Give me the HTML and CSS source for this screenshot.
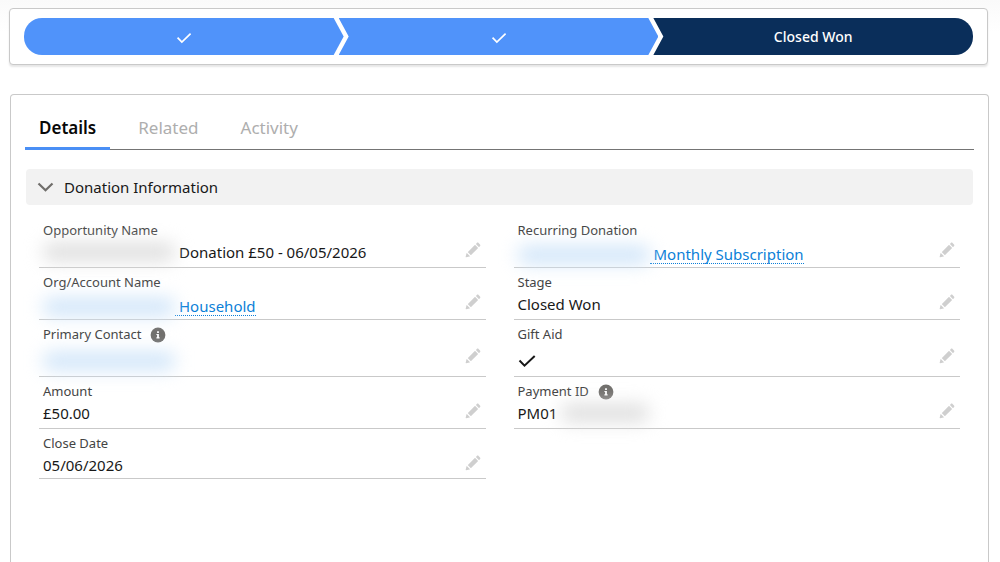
FILE: index.html
```html
<!DOCTYPE html>
<html lang="en">
<head>
<meta charset="utf-8">
<meta name="viewport" content="width=device-width, initial-scale=1">
<title>Donation</title>
<link rel="stylesheet" href="styles.css">
</head>
<body>
<svg class="sprite" aria-hidden="true">
  <symbol id="pencil" viewBox="0 0 52 52">
    <path d="M9.500 33.400l8.900 8.900c.4.400 1 .4 1.400 0L42 20c.4-.4.4-1 0-1.400l-8.800-8.800c-.4-.4-1-.4-1.400 0L9.500 32.100c-.4.400-.4 1 0 1.300zM36.100 5.700c-.4.400-.4 1 0 1.400l8.800 8.800c.4.400 1 .4 1.400 0l2.500-2.500c1.600-1.500 1.600-3.900 0-5.500l-4.700-4.700c-1.600-1.600-4.100-1.600-5.700 0l-2.300 2.500zM2.100 48.200c-.2 1 .7 1.900 1.700 1.700l10.900-2.600c.4-.1.700-.3.900-.5l.2-.2c.2-.2.300-.9-.1-1.300l-9-9c-.4-.4-1.100-.3-1.300-.1l-.2.200c-.3.300-.4.600-.5.900L2.100 48.200z"/>
  </symbol>
  <symbol id="info" viewBox="0 0 16 16">
    <circle cx="8" cy="8" r="7.400" fill="#706e6b"/>
    <path fill="#fff" d="M7.100 4.200h1.800v1.700H7.100zM6.400 6.900h2.500v3.400h.7v1.200H6.400v-1.200h.7V8.100h-.7z"/>
  </symbol>
  <symbol id="check" viewBox="0 0 18 14">
    <path d="M1.500 6.500l5 5.200L16.700 2" fill="none" stroke="currentColor"/>
  </symbol>
</svg>

<section class="card path-card">
  <ol class="path">
    <li class="step step-first"><svg class="step-check" role="img" aria-label="Stage complete"><use href="#check"/></svg></li>
    <li class="step"><svg class="step-check" role="img" aria-label="Stage complete"><use href="#check"/></svg></li>
    <li class="step step-current">Closed Won</li>
  </ol>
</section>

<main class="card record">
  <div class="tabs" role="tablist">
    <button class="tab tab-active" role="tab" aria-selected="true">Details</button>
    <button class="tab" role="tab" aria-selected="false">Related</button>
    <button class="tab" role="tab" aria-selected="false">Activity</button>
  </div>

  <div class="section">
    <button class="section-toggle" aria-expanded="true">
      <svg class="chevron" viewBox="0 0 16 10" aria-hidden="true"><path d="M1 1.500l7 6.800 7-6.800" fill="none" stroke="#706e6b" stroke-width="2.200"/></svg>
      Donation Information
    </button>

    <div class="columns">
      <dl class="fields">
        <div class="field">
          <dt>Opportunity Name</dt>
          <dd><span class="redacted"></span><span class="after">Donation £50 - 06/05/2026</span></dd>
          <button class="edit" aria-label="Edit Opportunity Name"><svg><use href="#pencil"/></svg></button>
        </div>
        <div class="field field-link">
          <dt>Org/Account Name</dt>
          <dd><span class="redacted redacted-blue"></span><a class="after" href="#">Household</a></dd>
          <button class="edit" aria-label="Edit Org/Account Name"><svg><use href="#pencil"/></svg></button>
        </div>
        <div class="field field-tall">
          <dt>Primary Contact <svg class="info" role="img" aria-label="Help"><use href="#info"/></svg></dt>
          <dd><span class="redacted redacted-blue"></span></dd>
          <button class="edit" aria-label="Edit Primary Contact"><svg><use href="#pencil"/></svg></button>
        </div>
        <div class="field">
          <dt>Amount</dt>
          <dd>£50.00</dd>
          <button class="edit" aria-label="Edit Amount"><svg><use href="#pencil"/></svg></button>
        </div>
        <div class="field field-last">
          <dt>Close Date</dt>
          <dd>05/06/2026</dd>
          <button class="edit" aria-label="Edit Close Date"><svg><use href="#pencil"/></svg></button>
        </div>
      </dl>
      <dl class="fields">
        <div class="field field-link">
          <dt>Recurring Donation</dt>
          <dd><span class="redacted redacted-blue"></span><a class="after" href="#">Monthly Subscription</a></dd>
          <button class="edit" aria-label="Edit Recurring Donation"><svg><use href="#pencil"/></svg></button>
        </div>
        <div class="field">
          <dt>Stage</dt>
          <dd>Closed Won</dd>
          <button class="edit" aria-label="Edit Stage"><svg><use href="#pencil"/></svg></button>
        </div>
        <div class="field field-tall">
          <dt>Gift Aid</dt>
          <dd><svg class="value-check" role="img" aria-label="True"><use href="#check"/></svg></dd>
          <button class="edit" aria-label="Edit Gift Aid"><svg><use href="#pencil"/></svg></button>
        </div>
        <div class="field">
          <dt>Payment ID <svg class="info" role="img" aria-label="Help"><use href="#info"/></svg></dt>
          <dd>PM01<span class="redacted redacted-short"></span></dd>
          <button class="edit" aria-label="Edit Payment ID"><svg><use href="#pencil"/></svg></button>
        </div>
      </dl>
    </div>
  </div>
</main>
</body>
</html>
```
FILE: styles.css
```css
* {
  box-sizing: border-box;
}

body {
  margin: 0;
  padding: 8px 11px 0 10px;
  min-height: 100vh;
  display: flex;
  flex-direction: column;
  gap: 29px;
  background: linear-gradient(#fafafa, #fff 32px);
  color: #181818;
  font-family: "Noto Sans", "Open Sans", sans-serif;
  font-size: 15px;
  line-height: 20px;
}

button {
  border: 0;
  padding: 0;
  background: none;
  color: inherit;
  font: inherit;
  cursor: pointer;
}

.sprite {
  display: none;
}

.card {
  border: 1px solid #c9c9c9;
  border-radius: 4px;
  background: #fff;
}

.path-card {
  margin: 0 1px 0 -1px;
  padding: 9px 14px;
  box-shadow: 0 2px 2px rgba(0, 0, 0, 0.1);
}

/* Progress path */
.path {
  display: flex;
  margin: 0;
  padding: 0;
  list-style: none;
  border-radius: 18px;
  overflow: hidden;
}

.step {
  flex: 1 1 0;
  height: 37px;
  display: flex;
  align-items: center;
  justify-content: center;
  margin-left: -5px;
  background: #5093fa;
  color: #fff;
  font-size: 14px;
  font-weight: 500;
  clip-path: polygon(0 0, calc(100% - 10px) 0, 100% 50%, calc(100% - 10px) 100%, 0 100%, 10px 50%);
}

.step-first {
  margin-left: 0;
  clip-path: polygon(0 0, calc(100% - 10px) 0, 100% 50%, calc(100% - 10px) 100%, 0 100%);
}

.step-current {
  background: #0a2e5a;
  clip-path: polygon(0 0, 100% 0, 100% 100%, 0 100%, 10px 50%);
}

.step-check {
  width: 16px;
  height: 12px;
  margin-top: 3px;
  stroke-width: 2;
}

/* Record panel */
.record {
  flex: 1;
  padding: 12px 14px;
  border-bottom: 0;
  border-radius: 4px 4px 0 0;
}

.tabs {
  display: flex;
  gap: 14px;
  border-bottom: 1px solid #747474;
}

.tab {
  height: 43px;
  padding: 2px 14px 0;
  margin-bottom: -1px;
  border-bottom: 3px solid transparent;
  color: #aeaeae;
  font-size: 17px;
}

.tab-active {
  border-bottom-color: #4a8ff5;
  color: #080808;
  font-weight: 600;
}

.section {
  margin: 19px 1px 0;
}

.section-toggle {
  display: flex;
  align-items: center;
  gap: 10px;
  width: 100%;
  height: 36px;
  padding-left: 11px;
  border-radius: 4px;
  background: #f2f2f2;
}

.chevron {
  width: 17px;
  height: 10px;
}

.columns {
  display: grid;
  grid-template-columns: 1fr 1fr;
  gap: 28px;
  padding: 11px 13px;
}

.fields {
  margin: 0;
}

.field {
  display: grid;
  grid-template-columns: 1fr auto;
  grid-template-rows: 22px auto;
  height: 52px;
  padding: 3px 5px 0 4px;
  border-bottom: 1px solid #c9c9c9;
}

.field-tall {
  height: 57px;
}

.field-last {
  height: 50px;
}

dt {
  display: flex;
  align-items: center;
  gap: 9px;
  color: #444;
  font-size: 13px;
}

dd {
  grid-column: 1;
  display: flex;
  align-items: center;
  height: 22px;
  margin: 0;
}

.field-link dd {
  margin-top: 3px;
}

.field-tall dd {
  margin-top: 5px;
}

.info {
  width: 16px;
  height: 16px;
  margin-top: 2px;
}

.edit {
  grid-column: 2;
  grid-row: 1 / 3;
  align-self: start;
  height: 16px;
  margin-top: 23px;
}

.edit svg {
  display: block;
  width: 16px;
  height: 16px;
  fill: #cfcfcf;
}

.field-tall .edit {
  margin-top: 25px;
}

.value-check {
  width: 18px;
  height: 14px;
  stroke-width: 2;
}

.after {
  padding-left: 4px;
}

a {
  color: #0b7fd8;
  line-height: 17px;
  text-decoration: none;
  border-bottom: 1px dotted #0b7fd8;
}

/* Masked personal details */
.redacted {
  width: 132px;
  height: 18px;
  border-radius: 8px;
  background: #dedede;
  filter: blur(9px);
}

.redacted-blue {
  background: #d0e5f9;
}

.redacted-short {
  width: 88px;
  margin-left: 4px;
}
```
